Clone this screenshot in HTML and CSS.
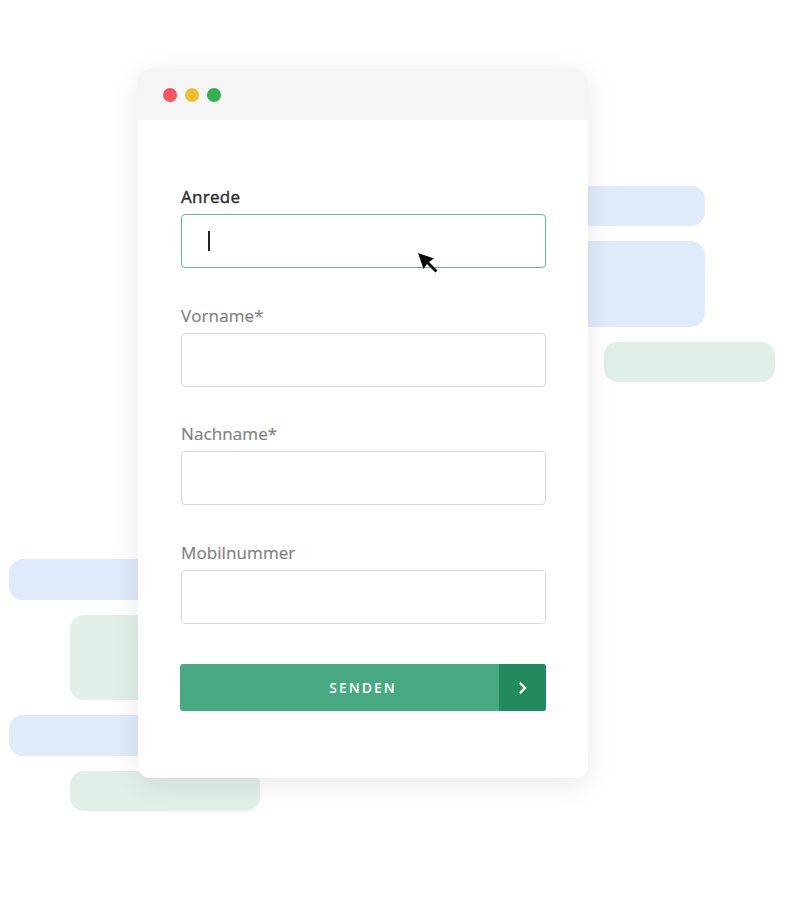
FILE: index.html
```html
<!DOCTYPE html>
<html lang="de">
<head>
<meta charset="utf-8">
<title>Formular</title>
<link rel="stylesheet" href="styles.css">
</head>
<body>
<div class="stage">
  <div class="blob blue b1"></div>
  <div class="blob blue b2"></div>
  <div class="blob green g1"></div>
  <div class="blob blue b3"></div>
  <div class="blob green g2"></div>
  <div class="blob blue b4"></div>
  <div class="blob green g3"></div>

  <div class="window">
    <div class="titlebar">
      <span class="dot red"></span>
      <span class="dot yellow"></span>
      <span class="dot greendot"></span>
    </div>
    <form class="form">
      <div class="field">
        <label class="label active">Anrede</label>
        <div class="input focus"><span class="caret"></span></div>
      </div>
      <div class="field">
        <label class="label">Vorname*</label>
        <div class="input"></div>
      </div>
      <div class="field">
        <label class="label">Nachname*</label>
        <div class="input"></div>
      </div>
      <div class="field last">
        <label class="label">Mobilnummer</label>
        <div class="input"></div>
      </div>
      <div class="button">
        <span class="btn-text">SENDEN</span>
        <span class="btn-arrow">
          <svg width="10" height="12" viewBox="0 0 10 12"><path d="M2.5 1.5 L7 6 L2.5 10.5" fill="none" stroke="#fff" stroke-width="2.4" stroke-linecap="square"/></svg>
        </span>
      </div>
    </form>
    <svg class="pointer" width="24" height="24" viewBox="0 0 24 24">
      <path d="M0 0 L16 5.5 L11 9 L19.5 17.5 L17.5 19.5 L9 11 L5.5 16 Z" fill="#000"/>
    </svg>
  </div>
</div>
</body>
</html>
```
FILE: styles.css
```css
html, body {
  margin: 0;
  padding: 0;
  background: #fff;
}
.stage {
  position: relative;
  width: 810px;
  height: 900px;
  overflow: hidden;
  font-family: "Open Sans", "Liberation Sans", sans-serif;
}
.blob {
  position: absolute;
  border-radius: 14px;
}
.blue { background: #dfeafb; }
.green { background: #e1efe9; }
.b1 { left: 420px; top: 186px; width: 285px; height: 40px; }
.b2 { left: 420px; top: 241px; width: 285px; height: 86px; }
.g1 { left: 604px; top: 342px; width: 171px; height: 40px; }
.b3 { left: 9px; top: 559px; width: 290px; height: 41px; }
.g2 { left: 70px; top: 615px; width: 230px; height: 85px; }
.b4 { left: 9px; top: 715px; width: 290px; height: 41px; }
.g3 { left: 70px; top: 771px; width: 190px; height: 40px; }

.window {
  position: absolute;
  left: 138px;
  top: 69px;
  width: 450px;
  height: 709px;
  background: #fff;
  border-radius: 12px;
  box-shadow: 0 6px 30px rgba(0, 0, 0, 0.09);
  overflow: hidden;
}
.titlebar {
  height: 51px;
  background: #f5f5f5;
  display: flex;
  align-items: center;
  gap: 8px;
  padding-left: 25px;
}
.dot {
  width: 14px;
  height: 14px;
  border-radius: 50%;
  display: block;
}
.red { background: #f25661; }
.yellow { background: #eebf34; }
.greendot { background: #34ae52; }

.form {
  padding: 66px 42px 0 43px;
  display: flex;
  flex-direction: column;
}
.field {
  display: flex;
  flex-direction: column;
  gap: 6px;
  margin-bottom: 36.5px;
}
.field.last { margin-bottom: 40.5px; }
.label {
  font-size: 17px;
  line-height: 22px;
  color: #7f7f7f;
  font-weight: 500;
  letter-spacing: 0.1px;
  -webkit-text-stroke: 0.2px #7f7f7f;
}
.label.active {
  color: #2f2f2f;
  letter-spacing: 0.3px;
  -webkit-text-stroke: 0.45px #2f2f2f;
}
.input {
  height: 54px;
  box-sizing: border-box;
  border: 1.5px solid #dadada;
  border-radius: 4px;
  display: flex;
  align-items: center;
  padding-left: 26px;
}
.input.focus {
  border-color: #5fb993;
}
.caret {
  width: 1.5px;
  height: 20px;
  background: #222;
}
.button {
  margin-left: -1px;
  height: 47px;
  display: flex;
  border-radius: 3px;
  overflow: hidden;
  background: #48a881;
}
.btn-text {
  flex: 1;
  display: flex;
  align-items: center;
  justify-content: center;
  padding-left: 47px;
  color: #fff;
  font-size: 14px;
  font-weight: 600;
  letter-spacing: 2px;
}
.btn-arrow {
  width: 47px;
  background: #238a60;
  display: flex;
  align-items: center;
  justify-content: center;
}
.pointer {
  position: absolute;
  left: 280px;
  top: 184px;
}
```
